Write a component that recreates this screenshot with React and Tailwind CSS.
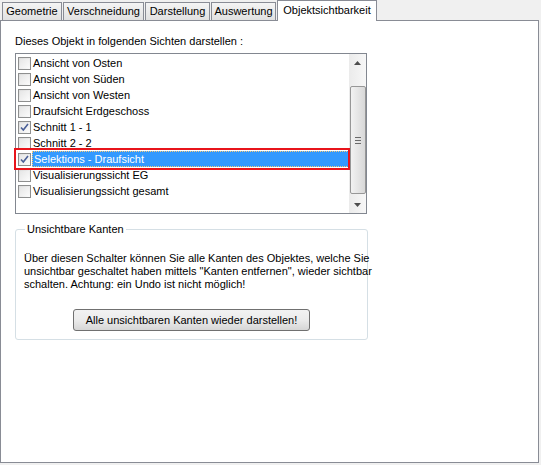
import React from 'react';

const tabs = [
  { label: 'Geometrie', w: 'w-[60px]' },
  { label: 'Verschneidung', w: 'w-[81px]' },
  { label: 'Darstellung', w: 'w-[65px]' },
  { label: 'Auswertung', w: 'w-[65px]' },
];

const items = [
  { label: 'Ansicht von Osten', checked: false },
  { label: 'Ansicht von Süden', checked: false },
  { label: 'Ansicht von Westen', checked: false },
  { label: 'Draufsicht Erdgeschoss', checked: false },
  { label: 'Schnitt 1 - 1', checked: true },
  { label: 'Schnitt 2 - 2', checked: false },
  { label: 'Selektions - Draufsicht', checked: true, selected: true },
  { label: 'Visualisierungssicht EG', checked: false },
  { label: 'Visualisierungssicht gesamt', checked: false },
];

const CheckBox = ({ checked }) => (
  <div className="w-[13px] h-[13px] border border-[#8e8f8f] bg-linear-to-br from-[#dcdcdc] to-[#fbfbfb] p-px">
    <div className="w-full h-full bg-linear-to-br from-[#e6e6e6] to-[#fafafa] flex items-center justify-center">
      {checked && (
        <svg width="9" height="9" viewBox="0 0 9 9">
          <path d="M1 4.5 L3.3 7 L8 1" fill="none" stroke="#4a5f97" strokeWidth="1.6" />
        </svg>
      )}
    </div>
  </div>
);

const ScrollBar = () => (
  <div className="w-[17px] h-full bg-linear-to-r from-[#ebebeb] to-[#f7f7f7] flex flex-col items-center">
    <div className="h-[17px] w-full flex items-center justify-center">
      <svg width="7" height="4" viewBox="0 0 7 4"><path d="M0 4 L3.5 0 L7 4 Z" fill="#4d4d4d" /></svg>
    </div>
    <div className="h-[15px]" />
    <div className="w-[16px] h-[108px] border border-[#979797] rounded-[2px] bg-linear-to-r from-[#f2f2f2] to-[#d8d8d8] flex flex-col items-center justify-center gap-[2px]">
      <div className="w-[6px] h-px bg-[#6a6a6a]" />
      <div className="w-[6px] h-px bg-[#6a6a6a]" />
      <div className="w-[6px] h-px bg-[#6a6a6a]" />
    </div>
    <div className="flex-1" />
    <div className="h-[17px] w-full flex items-center justify-center">
      <svg width="7" height="4" viewBox="0 0 7 4"><path d="M0 0 L3.5 4 L7 0 Z" fill="#4d4d4d" /></svg>
    </div>
  </div>
);

export default function App() {
  return (
    <div className="w-[541px] h-[465px] bg-[#f0f0f0] font-['Liberation_Sans',Arial,sans-serif] text-[11px] leading-[13px] text-black overflow-hidden">
      <div className="flex items-end h-[20px] pl-[2px] gap-px relative z-10">
        {tabs.map((t) => (
          <div
            key={t.label}
            className={`${t.w} h-[18px] border border-b-0 border-[#898c95] bg-linear-to-b from-[#f4f4f4] to-[#e1e1e1] flex items-center justify-center whitespace-nowrap`}
          >
            {t.label}
          </div>
        ))}
        <div className="w-[100px] h-[21px] -mb-px border border-b-0 border-[#898c95] bg-white flex items-center justify-center pb-[2px] whitespace-nowrap">
          Objektsichtbarkeit
        </div>
      </div>
      <div className="w-[539px] h-[443px] border border-[#898c95] bg-white px-[14px] pt-[14px]">
        <div>Dieses Objekt in folgenden Sichten darstellen :</div>
        <div className="mt-[5px] w-[352px] h-[161px] border border-[#828790] flex relative">
          <div className="flex-1 pt-px">
            {items.map((it) => (
              <div key={it.label} className="h-[16px] flex items-center">
                <div className="w-[17px] pl-[2px] flex items-center">
                  <CheckBox checked={it.checked} />
                </div>
                {it.selected ? (
                  <div className="flex-1 h-[16px] bg-[#3399ff] text-white border border-dotted border-[#f5c97a] flex items-center pl-px -ml-px">
                    {it.label}
                  </div>
                ) : (
                  <div>{it.label}</div>
                )}
              </div>
            ))}
          </div>
          <ScrollBar />
          <div className="absolute left-[-2px] top-[94px] w-[336px] h-[22px] border-2 border-[#e8141b]" />
        </div>
        <fieldset className="mt-[9px] w-[353px] min-w-0 h-[117px] border border-[#d5dfe5] rounded-[3px] px-[8px]">
          <legend className="px-[2px] ml-[1px] text-black">Unsichtbare Kanten</legend>
          <p className="mt-[16px] whitespace-nowrap">
            Über diesen Schalter können Sie alle Kanten des Objektes, welche Sie
            <br />
            unsichtbar geschaltet haben mittels "Kanten entfernen", wieder sichtbar
            <br />
            schalten. Achtung: ein Undo ist nicht möglich!
          </p>
          <div className="flex justify-center mt-[18px]">
            <button className="w-[237px] h-[22px] border border-[#707070] rounded-[3px] bg-linear-to-b from-[#f2f2f2] via-[#ebebeb] to-[#d6d6d6]">
              Alle unsichtbaren Kanten wieder darstellen!
            </button>
          </div>
        </fieldset>
      </div>
    </div>
  );
}
